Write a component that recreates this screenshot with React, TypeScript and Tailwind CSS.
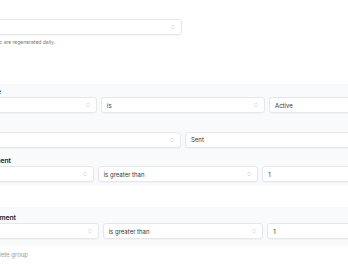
import { ChevronsUpDown } from 'lucide-react';

function Select({ value = '' }: { value?: string }) {
  return (
    <div className="flex h-4 items-center justify-between rounded-[3px] border border-gray-200 bg-white px-[5px] text-[6px] text-[#333] shadow-[0_1px_1px_rgba(0,0,0,0.03)]">
      <span>{value}</span>
      <ChevronsUpDown className="h-[6px] w-[6px] text-gray-400" strokeWidth={1.5} />
    </div>
  );
}

function Field({ value }: { value: string }) {
  return (
    <div className="flex h-4 items-center rounded-[3px] border border-gray-200 bg-white px-[5px] text-[6px] text-[#333] shadow-[0_1px_1px_rgba(0,0,0,0.03)]">
      {value}
    </div>
  );
}

function Label({ children }: { children: string }) {
  return <div className="mb-px text-[6.75px] font-semibold leading-[8px] text-[#222]">{children}</div>;
}

export default function App() {
  return (
    <div className="h-[268px] w-[348px] overflow-hidden bg-white font-['Inter',sans-serif]">
      <div className="-ml-[79px] w-[540px] pt-[19px]">
        <div className="pl-[12px]">
          <div className="w-[249px]">
            <Select />
          </div>
          <p className="mt-[3px] text-[5px] leading-[8px] text-[#777]">
            Segments with dynamic logic are regenerated daily.
          </p>
        </div>

        <div className="mt-[38px] bg-gray-50 px-[12px] py-[4px]">
          <div className="w-[500px]">
            <Label>Client lifecycle stage</Label>
            <div className="grid grid-cols-3 gap-[4px]">
              <Select />
              <Select value="is" />
              <Field value="Active" />
            </div>
          </div>
          <div className="mt-[9.5px] w-[500px]">
            <Label>Type</Label>
            <div className="grid grid-cols-2 gap-[4px]">
              <Select />
              <Field value="Sent" />
            </div>
          </div>
          <div className="mt-[9.5px] w-[500px]">
            <Label>Total email engagement</Label>
            <div className="flex items-center gap-[4px]">
              <div className="grid flex-1 grid-cols-3 gap-[4px]">
                <Select />
                <Select value="is greater than" />
                <Field value="1" />
              </div>
              <div className="w-[6px]" />
            </div>
          </div>
        </div>

        <div className="mt-[21px] bg-gray-50 py-[7px] pl-[17px] pr-[12px]">
          <div className="w-[500px]">
            <Label>Total email engagement</Label>
            <div className="flex items-center gap-[4px]">
              <div className="grid flex-1 grid-cols-3 gap-[4px]">
                <Select />
                <Select value="is greater than" />
                <Field value="1" />
              </div>
              <div className="w-[6px]" />
            </div>
          </div>
        </div>

        <div className="mt-[5px] flex gap-[14px] pl-[17px] text-[6px] leading-[8px] text-[#999]">
          <span>Add condition</span>
          <span>Delete group</span>
        </div>
      </div>
    </div>
  );
}
